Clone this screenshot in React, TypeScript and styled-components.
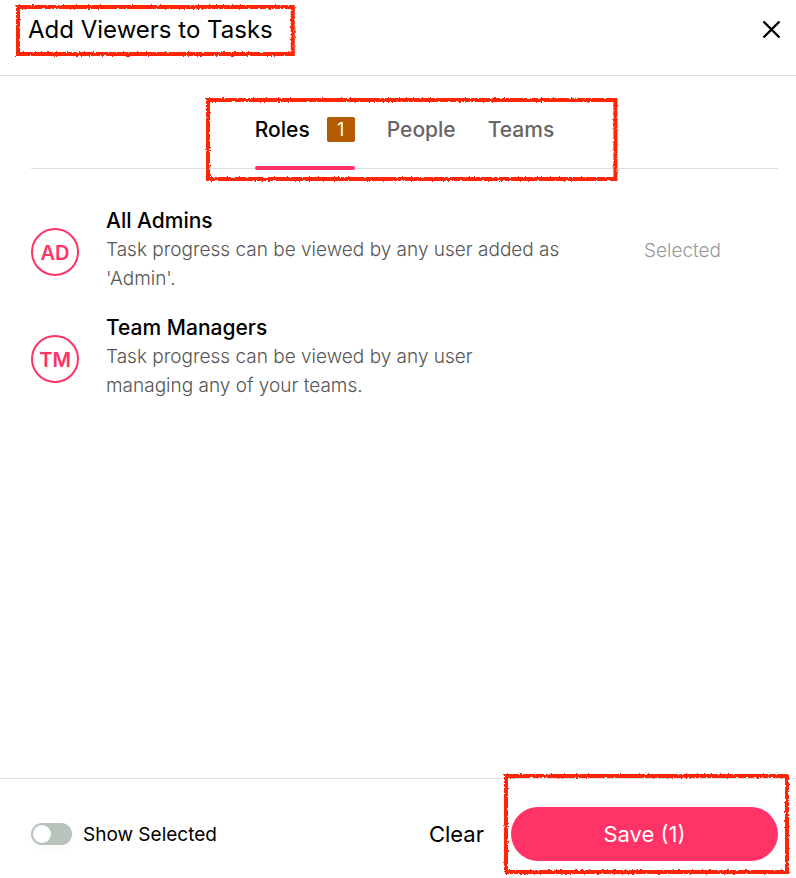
import React, { useState } from "react";
import styled, { createGlobalStyle } from "styled-components";

const pink = "#ff3366";
const rule = "#dedede";

const GlobalStyle = createGlobalStyle`
  *, *::before, *::after { box-sizing: border-box; }
  body { margin: 0; background: #fff; }
  button, input { font: inherit; color: inherit; }
  button { background: none; border: 0; padding: 0; cursor: pointer; }
  h1, h2, p, ul { margin: 0; padding: 0; }
`;

const Dialog = styled.div`
  display: flex;
  flex-direction: column;
  min-height: 100vh;
  color: #000;
  font-family: Inter, "Noto Sans", sans-serif;
`;

const Header = styled.header`
  display: flex;
  justify-content: space-between;
  align-items: flex-start;
  padding: 5px 15px 19px 16px;
  border-bottom: 1px solid ${rule};
`;

const TitleBox = styled.div`
  position: relative;
  padding: 9px 22px 10px 12px;
`;

const Title = styled.h1`
  font-size: 24px;
  line-height: 32px;
  font-weight: 400;
`;

const CloseButton = styled.button`
  display: flex;
  margin-top: 15px;
`;

const MarkerFrame = styled.div<{ $inset: string }>`
  position: absolute;
  inset: ${(p) => p.$inset};
  pointer-events: none;

  svg {
    display: block;
    overflow: visible;
  }
`;

const MarkerLine = styled.rect`
  x: 2px;
  y: 2px;
  width: calc(100% - 4px);
  height: calc(100% - 4px);
  fill: none;
  stroke: #ff2608;
  stroke-width: 4px;
`;

const Content = styled.main`
  flex: 1;
  padding: 22px 18px 0 31px;
`;

const TabBar = styled.div`
  display: flex;
  justify-content: center;
  border-bottom: 1px solid ${rule};
`;

const TabList = styled.div`
  position: relative;
  display: flex;
  gap: 32px;
`;

const Tab = styled.button<{ $active: boolean }>`
  display: flex;
  flex-direction: column;
  justify-content: space-between;
  height: 72px;
  margin-bottom: -2px;
  padding-top: 19px;
  font-size: 21px;
  line-height: 25px;
  font-weight: 500;
  color: ${(p) => (p.$active ? "#000" : "#666")};

  &::after {
    content: "";
    width: 100%;
    height: 4px;
    border-radius: 2px;
    background: ${(p) => (p.$active ? pink : "transparent")};
  }
`;

const TabLabel = styled.span`
  display: flex;
  gap: 17px;
`;

const Badge = styled.span`
  width: 28px;
  border-radius: 2px;
  background: #b45a00;
  color: #fff;
  font-size: 18px;
  font-weight: 400;
  text-align: center;
`;

const RoleList = styled.ul`
  display: flex;
  flex-direction: column;
  gap: 20px;
  padding-top: 38px;
  list-style: none;
`;

const RoleRow = styled.li`
  display: grid;
  grid-template-columns: 48px minmax(0, 455px) 1fr;
  column-gap: 27px;
  align-items: center;
`;

const Avatar = styled.span`
  display: flex;
  align-items: center;
  justify-content: center;
  height: 48px;
  margin-top: 3px;
  padding-top: 2px;
  border: 2px solid ${pink};
  border-radius: 50%;
  color: ${pink};
  font-size: 20px;
  font-weight: 600;
`;

const RoleName = styled.h2`
  font-size: 21px;
  line-height: 28px;
  font-weight: 500;
`;

const RoleText = styled.p`
  padding-bottom: 1px;
  font-size: 19px;
  line-height: 29px;
  font-weight: 300;
  color: #555;
`;

const Status = styled.span`
  margin-left: 56px;
  font-size: 19px;
  font-weight: 300;
  color: #999;
`;

const Footer = styled.footer`
  display: flex;
  align-items: center;
  gap: 27px;
  padding: 28px 18px 17px 31px;
  border-top: 1px solid ${rule};
`;

const ToggleLabel = styled.label`
  display: flex;
  align-items: center;
  gap: 11px;
  margin-right: auto;
  font-size: 19px;
`;

const Toggle = styled.input`
  appearance: none;
  width: 41px;
  height: 22px;
  margin: 0;
  padding: 2px;
  border-radius: 11px;
  background: #b8c4bb;
  box-shadow: 0 4px 6px #00000008;

  &::before {
    content: "";
    display: block;
    width: 18px;
    height: 18px;
    border-radius: 50%;
    background: #fff;
  }
  &:checked { background: ${pink}; }
  &:checked::before { margin-left: 19px; }
`;

const ClearButton = styled.button`
  font-size: 22px;
`;

const SaveBox = styled.div`
  position: relative;
  flex: 0 0 267px;
`;

const SaveButton = styled.button`
  width: 100%;
  height: 54px;
  border-radius: 27px;
  background: ${pink};
  color: #fff;
  font-size: 22px;
`;

function Marker({ id, inset = "0" }: { id: string; inset?: string }) {
  return (
    <MarkerFrame $inset={inset}>
      <svg width="100%" height="100%" aria-hidden="true">
        <filter id={id} filterUnits="userSpaceOnUse" x="-10" y="-10" width="600" height="200" colorInterpolationFilters="sRGB">
          <feTurbulence type="fractalNoise" baseFrequency="0.43" numOctaves="2" seed="4" result="grain" />
          <feDisplacementMap in="SourceGraphic" in2="grain" scale="3" xChannelSelector="R" yChannelSelector="G" />
        </filter>
        <MarkerLine filter={`url(#${id})`} />
      </svg>
    </MarkerFrame>
  );
}

const tabs = [{ name: "Roles", count: 1 }, { name: "People", count: 0 }, { name: "Teams", count: 0 }];

const roles = [
  { initials: "AD", name: "All Admins", text: "Task progress can be viewed by any user added as 'Admin'.", selected: true },
  { initials: "TM", name: "Team Managers", text: "Task progress can be viewed by any user managing any of your teams.", selected: false },
];

export default function App() {
  const [tab, setTab] = useState("Roles");
  return (
    <Dialog role="dialog" aria-labelledby="dialog-title">
      <GlobalStyle />
      <Header>
        <TitleBox>
          <Title id="dialog-title">Add Viewers to Tasks</Title>
          <Marker id="marker-title" />
        </TitleBox>
        <CloseButton aria-label="Close">
          <svg width="19" height="19" viewBox="0 0 19 19" fill="none" stroke="#000" strokeWidth="2.4">
            <path d="M1.5 1.5 17.5 17.5M17.5 1.5 1.5 17.5" />
          </svg>
        </CloseButton>
      </Header>
      <Content>
        <TabBar>
          <TabList role="tablist">
            {tabs.map(({ name, count }) => (
              <Tab key={name} role="tab" aria-selected={tab === name} $active={tab === name} onClick={() => setTab(name)}>
                <TabLabel>
                  {name}
                  {count > 0 && <Badge>{count}</Badge>}
                </TabLabel>
              </Tab>
            ))}
            <Marker id="marker-tabs" inset="0 -63px -13px -49px" />
          </TabList>
        </TabBar>
        <RoleList>
          {roles.map((role) => (
            <RoleRow key={role.initials}>
              <Avatar>{role.initials}</Avatar>
              <div>
                <RoleName>{role.name}</RoleName>
                <RoleText>{role.text}</RoleText>
              </div>
              {role.selected && <Status>Selected</Status>}
            </RoleRow>
          ))}
        </RoleList>
      </Content>
      <Footer>
        <ToggleLabel>
          <Toggle type="checkbox" role="switch" />
          Show Selected
        </ToggleLabel>
        <ClearButton>Clear</ClearButton>
        <SaveBox>
          <SaveButton>Save (1)</SaveButton>
          <Marker id="marker-save" inset="-33px -11px -13px -7px" />
        </SaveBox>
      </Footer>
    </Dialog>
  );
}
